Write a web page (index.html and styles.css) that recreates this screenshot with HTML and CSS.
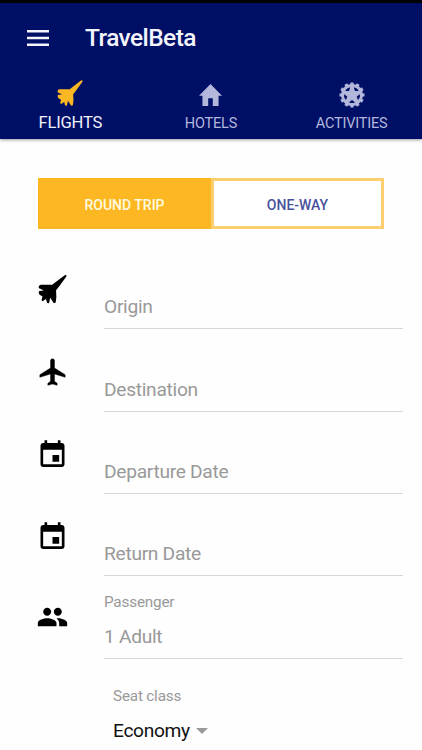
FILE: index.html
```html
<!DOCTYPE html>
<html lang="en">
<head>
<meta charset="utf-8">
<title>TravelBeta</title>
<link rel="stylesheet" href="styles.css">
</head>
<body>
<svg class="defs" width="0" height="0" aria-hidden="true">
  <symbol id="jet" viewBox="0 0 90 90"><path d="M88 1L83 2L55 23L44 32L9 32L3 35L2 42L18 50L4 51L2 55L4 62L14 68L11 80L14 83L25 76L28 88L34 89L38 72L49 89L55 87L57 70L56 49L65 38L88 6Z"/></symbol>
  <symbol id="event" viewBox="0 0 24 24"><path d="M17 12h-5v5h5v-5zM16 1v2H8V1H6v2H5c-1.11 0-1.99.9-1.99 2L3 19c0 1.1.89 2 2 2h14c1.1 0 2-.9 2-2V5c0-1.1-.9-2-2-2h-1V1h-2zm3 18H5V8h14v11z"/></symbol>
</svg>
<header class="header">
  <div class="toolbar">
    <svg class="menu" viewBox="0 0 22 16"><path d="M0 1.3h22M0 8h22M0 14.7h22"/></svg>
    <h1 class="title">TravelBeta</h1>
  </div>
  <nav class="tabs">
    <a class="tab active"><svg class="tab-icon"><use href="#jet"/></svg><span>FLIGHTS</span></a>
    <a class="tab"><svg class="tab-icon home" viewBox="2 3 20 17" preserveAspectRatio="none"><path d="M10 20v-6h4v6h5v-8h3L12 3 2 12h3v8z"/></svg><span>HOTELS</span></a>
    <a class="tab"><svg class="tab-icon gear" viewBox="-13 -13 26 26">
      <circle r="10.9"/>
      <g class="teeth">
        <path id="teeth" d="M0-12.500V12.500M-12.500 0H12.500"/>
        <use href="#teeth" transform="rotate(30)"/>
        <use href="#teeth" transform="rotate(60)"/>
      </g>
      <g class="holes"><path id="hole" d="M-3 7.200Q0 9 3 7.200L0 5Z"/><use href="#hole" transform="rotate(72)"/><use href="#hole" transform="rotate(144)"/><use href="#hole" transform="rotate(216)"/><use href="#hole" transform="rotate(288)"/></g>
    </svg><span>ACTIVITIES</span></a>
  </nav>
</header>
<main class="form">
  <div class="trip">
    <button class="choice selected">ROUND TRIP</button>
    <button class="choice">ONE-WAY</button>
  </div>
  <div class="row"><svg class="icon jet"><use href="#jet"/></svg><div class="field"><span class="value">Origin</span></div></div>
  <div class="row"><svg class="icon plane" viewBox="0 0 24 24"><path d="M21.500 16v-2l-8-5V3.500c0-.83-.67-1.500-1.500-1.500s-1.500.67-1.500 1.500V9l-8 5v2l8-2.500V19l-2 1.500V22l3.500-1 3.500 1v-1.500L13.500 19v-5.500l8 2.500z"/></svg><div class="field"><span class="value">Destination</span></div></div>
  <div class="row"><svg class="icon"><use href="#event"/></svg><div class="field"><span class="value">Departure Date</span></div></div>
  <div class="row"><svg class="icon"><use href="#event"/></svg><div class="field"><span class="value">Return Date</span></div></div>
  <div class="row"><svg class="icon people" viewBox="0 0 24 24"><path d="M16 11c1.66 0 2.99-1.34 2.99-3S17.66 5 16 5c-1.66 0-3 1.34-3 3s1.34 3 3 3zm-8 0c1.66 0 2.99-1.34 2.99-3S9.66 5 8 5C6.34 5 5 6.34 5 8s1.34 3 3 3zm0 2c-2.33 0-7 1.17-7 3.5V19h14v-2.500c0-2.330-4.670-3.500-7-3.500zm8 0c-.29 0-.62.02-.97.05 1.160.840 1.970 1.970 1.970 3.450V19h6v-2.500c0-2.330-4.670-3.500-7-3.500z"/></svg><div class="field"><span class="label">Passenger</span><span class="value">1 Adult</span></div></div>
  <div class="seat">
    <span class="label">Seat class</span>
    <div class="select"><span>Economy</span><i class="arrow"></i></div>
  </div>
</main>
</body>
</html>
```
FILE: styles.css
```css
* { box-sizing: border-box; }
body {
  margin: 0;
  height: 750px;
  overflow: hidden;
  background: #fefefe;
  font-family: Roboto, "Liberation Sans", sans-serif;
}
.defs { display: block; }
.header {
  height: 139px;
  border-top: 3px solid #000;
  background: #000f66;
  box-shadow: 0 1px 3px rgba(0, 0, 0, .4);
}
.toolbar { display: flex; align-items: center; height: 69px; padding-left: 27px; }
.menu { width: 22px; height: 16px; stroke: #f4f4fc; stroke-width: 2.5; }
.title { margin: 0 0 0 36px; font-size: 24.5px; line-height: 30px; font-weight: 500; letter-spacing: -.58px; color: #f4f4fc; }
.tabs { display: grid; grid-template-columns: repeat(3, 1fr); height: 67px; }
.tab {
  display: flex;
  flex-direction: column;
  align-items: center;
  padding-top: 8px;
  font-size: 14.5px;
  line-height: 18px;
  letter-spacing: -.2px;
  color: #b3b7dc;
  fill: #b3b7dc;
}
.tab span { margin-top: 9px; }
.tab-icon { width: 26px; height: 26px; }
.active { font-size: 16.6px; color: #f0f1fb; fill: #fdb722; }
.active span { margin-top: 8px; }
.home { width: 23px; height: 22px; margin: 4px 0 0; }
.gear { margin-top: 2px; margin-bottom: -2px; }
.teeth { fill: none; stroke: #b3b7dc; stroke-width: 3.2; }
.holes { fill: #000f66; }
.form { padding: 39px 19px 0 38px; }
.trip { display: grid; grid-template-columns: 173px 173px; height: 51px; margin-bottom: 18px; }
.choice {
  padding: 2px 0 0;
  border: 3px solid #fdce70;
  background: #fff;
  color: #47529b;
  font: 500 14px Roboto, sans-serif;
}
.selected { border-color: #fcb722; background: #fcb722; color: #fffbe0; }
.row { display: grid; grid-template-columns: 66px 1fr; height: 82.35px; }
.icon { width: 33px; height: 32px; margin: 27px 0 0 -2.500px; }
.jet { width: 29px; height: 30px; margin: 27px 0 0; }
.plane { margin-top: 27px; stroke: #000; stroke-width: .3; }
.people { margin-top: 25px; }
.field {
  display: flex;
  flex-direction: column;
  justify-content: flex-end;
  padding-bottom: 9px;
  border-bottom: 1px solid #d6d6d6;
  color: #999;
}
.value { font-size: 19.2px; line-height: 24px; letter-spacing: -.3px; }
.label { font-size: 15.3px; line-height: 18px; letter-spacing: -.2px; color: #999; }
.field .label { margin-bottom: 14px; }
.seat { padding: 28px 0 0 75px; }
.seat .label { display: block; }
.select { display: flex; align-items: center; margin-top: 14px; font-size: 19.2px; letter-spacing: -.35px; line-height: 24px; color: #111; }
.arrow { margin-left: 6px; border: 6px solid transparent; border-top-color: #999; border-bottom: 0; }
```
